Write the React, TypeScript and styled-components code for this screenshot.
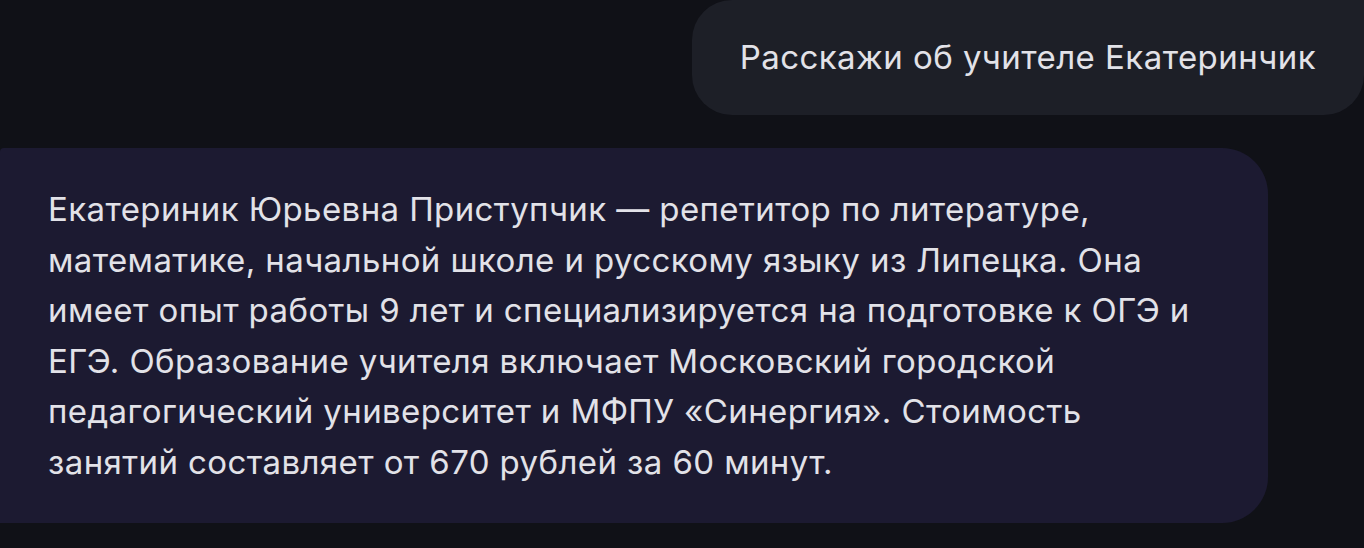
import React from "react";
import styled, { createGlobalStyle } from "styled-components";

const Global = createGlobalStyle`
  html, body { margin: 0; padding: 0; background: #101117; }
  body { font-family: Inter, "Noto Sans", sans-serif; }
`;

const Page = styled.div`
  width: 1364px;
  height: 548px;
  background: #101117;
  display: flex;
  flex-direction: column;
  gap: 33px;
  overflow: hidden;
`;

const Row = styled.div<{ $side: "left" | "right" }>`
  display: flex;
  justify-content: ${(p) => (p.$side === "right" ? "flex-end" : "flex-start")};
`;

const UserBubble = styled.div`
  background: #1d1f27;
  color: #e2e2e8;
  border-radius: 40px 0 40px 40px;
  height: 115px;
  box-sizing: border-box;
  padding: 0 48px 2px 48px;
  display: flex;
  align-items: center;
  font-size: 33px;
  letter-spacing: 0.45px;
  white-space: nowrap;
`;

const BotBubble = styled.div`
  background: #1c1a31;
  color: #e2e2e8;
  border-radius: 4px 46px 46px 0;
  width: 1268px;
  box-sizing: border-box;
  padding: 36px 48px 35px 48px;
  font-size: 33px;
  line-height: 50.6px;
  letter-spacing: 0.4px;
`;

const Line = styled.div`
  white-space: nowrap;
`;

const lines = [
  "Екатериник Юрьевна Приступчик — репетитор по литературе,",
  "математике, начальной школе и русскому языку из Липецка. Она",
  "имеет опыт работы 9 лет и специализируется на подготовке к ОГЭ и",
  "ЕГЭ. Образование учителя включает Московский городской",
  "педагогический университет и МФПУ «Синергия». Стоимость",
  "занятий составляет от 670 рублей за 60 минут.",
];

export default function App() {
  return (
    <>
      <Global />
      <Page>
        <Row $side="right">
          <UserBubble>Расскажи об учителе Екатеринчик</UserBubble>
        </Row>
        <Row $side="left">
          <BotBubble>
            {lines.map((l) => (
              <Line key={l}>{l}</Line>
            ))}
          </BotBubble>
        </Row>
      </Page>
    </>
  );
}
